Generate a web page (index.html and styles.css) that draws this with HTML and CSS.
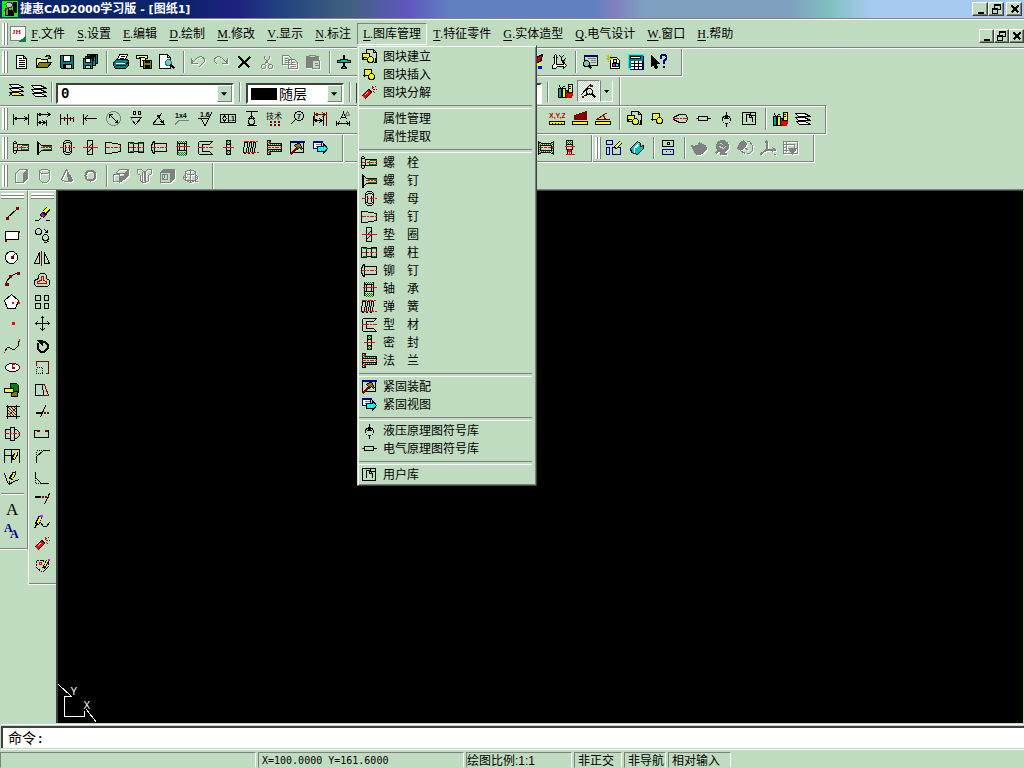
FILE: index.html
```html
<!DOCTYPE html>
<html lang="zh-CN">
<head>
<meta charset="utf-8">
<title>捷惠CAD2000学习版 - [图纸1]</title>
<link rel="stylesheet" href="styles.css">
</head>
<body>
<svg class="patterns" aria-hidden="true">
<defs>
<pattern id="chk-g" width="2" height="2" patternUnits="userSpaceOnUse" x="-.5" y="-.5"><path fill="#008000" stroke="none" d="M0 0h1v1h-1zM1 1h1v1h-1z"/></pattern>
<pattern id="chk-y" width="2" height="2" patternUnits="userSpaceOnUse" x="-.5" y="-.5"><path fill="#ffff00" stroke="none" d="M0 0h2v2h-2z"/><path fill="#c0dcc0" stroke="none" d="M0 0h1v1h-1z"/></pattern>
</defs>
</svg>
<svg class="sprite" aria-hidden="true">
<symbol id="app" viewBox="0 0 16 16"><path fill="#00ff00" stroke="none" d="M0 0h16v16h-16z"/><path fill="#000" stroke="none" d="M11 1h4v11h-4zM7 9h5v6h-5z"/><path fill="#c0c0c0" stroke="#404040" d="M3.500 3.500l2-2h4l1 2-1 3h-4z"/><path fill="#808080" d="M3.500 7.500h3v7h-3z"/><path stroke="#f00" d="M2 10l4-3M9 8l4 4"/></symbol>
<symbol id="jh" viewBox="0 0 16 16"><path fill="#fff" stroke="#808080" d="M.5 .5h15v14h-15z"/><path fill="#008040" stroke="none" d="M8 16l8-6v6z"/><path fill="#fff" stroke="none" d="M8 11l7-2-3 4z"/><text x="2" y="8" class="glyph serif red">JH</text></symbol>
<symbol id="new" viewBox="-.5 -.5 16 16"><path fill="#fff" d="M3 1h7l3 3v10h-10zM10 1v3h3M5 4h3M5 6h6M5 8h6M5 10h6M5 12h6"/></symbol>
<symbol id="open" viewBox="-.5 -.5 16 16"><path fill="#ffff80" d="M0 13v-9h4l1 1h6v3"/><path fill="#808000" d="M0 13l3-5h12l-4 5zM9 2l2-1h2l1 3M14 1v3h-3"/></symbol>
<symbol id="save" viewBox="-.5 -.5 16 16"><path fill="#008080" d="M1 1h13v13h-12l-1-1z"/><path fill="#fff" d="M4 1h7v6h-7z"/><path fill="#c0dcc0" d="M4 10h8v4h-8z"/><path fill="#000" d="M5 11h1v2h-1z"/></symbol>
<symbol id="saveall" viewBox="-.5 -.5 16 16"><path fill="#008080" d="M5 0h10v9h-10z"/><path fill="#fff" d="M7 1h6v3h-6z"/><path fill="#008080" d="M3 2h10v9h-10z"/><path fill="#fff" d="M5 3h6v3h-6z"/><path fill="#008080" d="M1 4h9v10h-9z"/><path fill="#fff" d="M3 4h5v4h-5z"/><path fill="#c0dcc0" d="M3 11h5v3h-5z"/></symbol>
<symbol id="print" viewBox="-.5 -.5 16 16"><path fill="#fff" d="M6 0h8l-2 5h-8z"/><path d="M7 2h4M6 4h4"/><path fill="#008080" d="M3 5h11l1 2v4l-3 3h-10l-2-3v-3z"/><path stroke="#fff" d="M2 9h9"/><path stroke="#ff0" d="M9 11h1"/><path d="M2 11h10l3-4"/></symbol>
<symbol id="plot" viewBox="-.5 -.5 16 16"><path fill="#ffff80" d="M0 1h11v3h-2v6h2v2h-7v-8h-4z"/><path d="M2 3h6M5 6h3"/><path fill="#808000" d="M7 6h8v8h-8z"/><path fill="#000" d="M9 11h4v3h-4zM9 6h4v2h-4z"/></symbol>
<symbol id="preview" viewBox="-.5 -.5 16 16"><path fill="#fff" d="M0 0h8l3 3v11h-11zM8 0v3h3"/><circle cx="9" cy="8" r="3" fill="#80c0c0" stroke="#008080"/><path stroke-width="2" d="M11 10l4 4"/></symbol>
<symbol id="undo" viewBox="-.5 -.5 16 16"><path d="M1 3v6h6M1 9l5-5c3-3 8-2 8 2c0 2-2 3-4 5l-2 2M2 5v3M2 8l5-5"/></symbol>
<symbol id="redo" viewBox="-.5 -.5 16 16"><path d="M14 3v6h-6M14 9l-5-5c-3-3-8-2-8 2c0 2 2 3 3 4M13 5v3M13 8l-5-5"/></symbol>
<symbol id="del" viewBox="-.5 -.5 16 16"><path stroke-width="2" d="M2 2l11 11M14 2l-12 11"/></symbol>
<symbol id="cut" viewBox="-.5 -.5 16 16"><path d="M5 1v3l5 6M10 1v3l-5 6"/><circle cx="4" cy="12" r="2"/><circle cx="11" cy="12" r="2"/></symbol>
<symbol id="copy" viewBox="-.5 -.5 16 16"><path d="M0 1h6l3 3v6h-9zM2 4h3M2 6h5M2 8h5M6 5h6l3 3v6h-9zM8 8h4M8 10h5M8 12h5"/></symbol>
<symbol id="paste" viewBox="-.5 -.5 16 16"><path fill="#808080" d="M1 2h12v11h-12z"/><path fill="#c0dcc0" d="M4 1h6v2h-6zM7 6h7v8h-7zM9 9h3M9 11h4"/></symbol>
<symbol id="pan" viewBox="-.5 -.5 16 16"><path fill="#00c0c0" d="M7 1h1v4l6 1v2h-6v4l2 1v1h-5v-1l2-1v-4h-6v-2l6-1z"/></symbol>
<symbol id="brush" viewBox="-.5 -.5 16 16"><path fill="#c00000" d="M6 4l8-4-1 6-4 2z"/><path stroke="#ff0" stroke-width="3" d="M7 10h5"/><path stroke="#00f" stroke-width="3" d="M9 13h4"/></symbol>
<symbol id="ucs" viewBox="-.5 -.5 16 16"><path fill="#fff" d="M2 3l2-3 2 3h-1v7h7v-2l3 3-3 3v-2h-6l-2 2h-3v-3l2-2v-6h-1z"/><path d="M8 1l2 2v3M12 1l-2 2M10 5l4 4M14 4l-4 5"/></symbol>
<symbol id="find" viewBox="-.5 -.5 16 16"><path fill="#c0dcc0" d="M2 1h13v10h-13z"/><path stroke="#000080" stroke-width="2" d="M2 1h14"/><path stroke="#808080" d="M5 4h8M8 6h5M8 8h5"/><circle cx="4" cy="9" r="3" fill="#80c0c0"/><path stroke-width="2" d="M6 11l3 3"/></symbol>
<symbol id="newblk" viewBox="-.5 -.5 16 16"><path fill="#fff" d="M5 3h6l3 3v8h-9z"/><path fill="#ff0" d="M8 5h3v3h-3z"/><path fill="#f0f" d="M7 9h3v3h-3z"/><path fill="#0ff" d="M10 9h3v3h-3z"/><path stroke="#c0c000" d="M3 0v7M0 4h7M1 1l5 5M6 1l-5 5"/></symbol>
<symbol id="calc" viewBox="-.5 -.5 16 16"><path fill="#008080" stroke="#00ffff" d="M0 0h15v14h-15z"/><path stroke="#000080" d="M15 1v14h-14"/><path fill="#fff" d="M2 2h10v2h-10z"/><path stroke="#000" stroke-width="8" d="M2 10h12"/><path stroke="#fff" stroke-width="2" stroke-dasharray="3 1" d="M2 7h12M2 10h12M2 13h12"/></symbol>
<symbol id="help" viewBox="-.5 -.5 16 16"><path fill="#000" d="M0 1v11l2-2 2 4 2-1-2-4h4z"/><path stroke="#000080" stroke-width="2" d="M9 4v-2l2-2h2l2 2v2l-3 3v2M12 11v2"/></symbol>
<symbol id="layers-y" viewBox="-.5 -.5 16 16"><path fill="#fff" d="M4 4l-3-3h9l5 3z"/><path fill="#fff" d="M4 8l-3-3h9l5 3z"/><path fill="#ff0" d="M4 12l-3-3h9l5 3zM0 13l4-4"/></symbol>
<symbol id="layers" viewBox="-.5 -.5 16 16"><path fill="#fff" d="M4 13l-3-3h9l5 3z"/><path fill="#fff" d="M3 9l-3-3h9l6 3z"/><path fill="#fff" d="M3 5l-3-3h9l6 3z"/></symbol>
<symbol id="lib" viewBox="-.5 -.5 16 16"><path fill="#00a0a0" d="M1 5h3v9h-3zM2 2l1 3"/><path fill="#ff0" d="M5 5h3v9h-3z"/><path fill="#008000" d="M8 7h2v7h-2zM5 4l3-2"/><path fill="#ff0" d="M11 1h4v8h-4zM11 3h2M11 5h2"/><path fill="#f00" stroke="#c00" d="M9 10h6l-1 4h-4z"/></symbol>
<symbol id="snap" viewBox="-.5 -.5 16 16"><path d="M0 12l10-11M2 13l8-3"/><circle cx="9" cy="8" r="3"/><path stroke-width="2" d="M11 10l4 4"/><path stroke="#800000" stroke-width="2" d="M9 2h3M1 13h2"/></symbol>
<symbol id="dim" viewBox="-.5 -.5 16 16"><path d="M0 2v11M15 2v11M0 7h15M1 7l3-2M1 7l3 2M14 7l-3-2M14 7l-3 2"/></symbol>
<symbol id="dim2" viewBox="-.5 -.5 16 16"><path d="M1 1v13M10 8v6M1 3h13M2 3l3-2M2 3l3 2M14 3l-3-2M14 3l-3 2M1 11h9M2 11l3-2M2 11l3 2M9 11l-3-2M9 11l-3 2"/></symbol>
<symbol id="dim3" viewBox="-.5 -.5 16 16"><path d="M1 2v11M8 2v11M14 5v5M5 5v4M11 5v4"/><path stroke="#800000" d="M1 7h13"/></symbol>
<symbol id="dim4" viewBox="-.5 -.5 16 16"><path d="M1 2v11M2 7h12M2 7l3-3M2 7l3 3"/></symbol>
<symbol id="dia" viewBox="-.5 -.5 16 16"><circle cx="8" cy="7" r="7" stroke="#808080"/><path d="M4 3l8 8M4 3v3M4 3h3M12 11v-3M12 11h-3"/></symbol>
<symbol id="rough" viewBox="-.5 -.5 16 16"><path d="M5 0h2v3h-2zM10 0h2v3h-2zM1 6h12M4 9l3 4 6-7"/><path stroke="#808080" d="M2 6l3 5"/></symbol>
<symbol id="ang" viewBox="-.5 -.5 16 16"><path d="M1 13l9-11M1 13h12M6 4l6 8M6 4l1 3M6 4h3M12 12v-4M12 12l-3-2"/></symbol>
<symbol id="chamf" viewBox="0 0 16 16"><text x="1" y="7" class="glyph">1x4</text><path stroke="#808080" d="M1 13.500l4-4h10"/></symbol>
<symbol id="finish" viewBox="0 0 16 16"><text x="3" y="6" class="glyph">1.6</text><path d="M1 7.500h10M4 7l4 8 7-14"/></symbol>
<symbol id="tol" viewBox="0 0 16 16"><path d="M.5 3.500h15v8h-15zM8.500 3.500v8M4.500 5l2 2.500-2 2.500-2-2.500z"/><text x="9" y="10" class="glyph">.1</text></symbol>
<symbol id="datum" viewBox="-.5 -.5 16 16"><path d="M2 0h12M8 0v6M5 7l3-3 3 3zM3 14h10"/><circle cx="8" cy="10" r="3"/></symbol>
<symbol id="tech" viewBox="0 0 16 16"><text x="0" y="8" class="glyph cjk">技术</text><path stroke="#800000" stroke-width="2" stroke-dasharray="2 2" d="M4 11h10M4 14h10"/></symbol>
<symbol id="balloon" viewBox="0 0 16 16"><circle cx="10" cy="5" r="4.500"/><path d="M2 13l5-5"/><text x="8" y="8" class="glyph">7</text></symbol>
<symbol id="dimed" viewBox="-.5 -.5 16 16"><path stroke="#800000" d="M2 0v9M14 0v14M2 3h12M3 3l3-2M3 3l3 2M13 3l-3-2M13 3l-3 2"/><path d="M1 4v10M11 4v10M1 9h10M2 9l3-2M2 9l3 2M10 9l-3-2M10 9l-3 2"/></symbol>
<symbol id="dimtx" viewBox="-.5 -.5 16 16"><path d="M1 9v5M14 9v5M1 12h13M2 12l2-2M2 12l2 2M13 12l-2-2M13 12l-2 2M5 8l3-7 3 7M6 6h4"/><path stroke="#808080" d="M10 4l2-4 2 4z"/></symbol>
<symbol id="xyz" viewBox="0 0 16 16"><text x="0" y="7" class="glyph red">X,Y,Z</text><path fill="#ff0" d="M.5 10.500h15v3h-15zM3.500 12v1M6.500 12v1M9.500 12v1M12.500 12v1"/></symbol>
<symbol id="area" viewBox="-.5 -.5 16 16"><path fill="#800000" stroke="#800000" d="M2 8v-4l12-4v8z"/><path fill="#ff0" d="M0 10h15v3h-15zM3 12v1M6 12v1M9 12v1M12 12v1"/></symbol>
<symbol id="meas" viewBox="-.5 -.5 16 16"><path stroke="#800000" d="M1 8l11-7M1 8h13M8 4l2 4"/><path fill="#ff0" d="M0 10h15v3h-15zM3 12v1M6 12v1M9 12v1M12 12v1"/></symbol>
<symbol id="mkblk" viewBox="-.5 -.5 16 16"><path d="M5 3v-3h7l3 3v10h-3M12 0v3h3M14 8v5"/><path fill="url(#chk-y)" d="M1 4h7v6h-7z"/><circle cx="9" cy="10" r="3" fill="url(#chk-y)"/><path d="M0 8h5M2 7v3"/></symbol>
<symbol id="insblk" viewBox="-.5 -.5 16 16"><path fill="url(#chk-y)" d="M3 2h7v6h-7z"/><circle cx="10" cy="9" r="3" fill="url(#chk-y)"/><path d="M1 8h6M3 7v2"/></symbol>
<symbol id="dynamite" viewBox="-.5 -.5 16 16"><path stroke="#000" stroke-width="5" d="M2 12l7-7"/><path stroke="#f00" stroke-width="3" d="M2 12l6-6"/><path stroke="#fff" d="M3 10l3-3"/><path stroke="#c00000" stroke-dasharray="2 1" d="M11 3l4-3M11 4h5M11 2v-3M12 6l3 3"/></symbol>
<symbol id="feat" viewBox="-.5 -.5 16 16"><path d="M1 8v-2l4-2 2-1h6l2 3v2l-2 3h-6l-2-1z"/><path stroke="#f00" stroke-dasharray="6 1 2 1" d="M0 7h16"/></symbol>
<symbol id="elec" viewBox="-.5 -.5 16 16"><path d="M3 5h9v4h-9zM0 7h3M12 7h3"/><path stroke="#f00" d="M0 7h1M15 7h1"/></symbol>
<symbol id="hyd" viewBox="-.5 -.5 16 16"><circle cx="8" cy="8" r="4"/><path d="M8 0v7M8 12v3"/><path fill="#000" d="M6 7l2-3 2 3z"/></symbol>
<symbol id="userlib" viewBox="-.5 -.5 16 16"><path d="M1 1h8v3h5v9h-13zM5 10v-7h3l3 3v4M8 3v3h3M9 1h5v3"/></symbol>
<symbol id="bolt" viewBox="-.5 -.5 16 16"><path d="M1 1h1l2 3v6l-2 3h-1l-1-1v-10zM0 3h3M0 10h3M4 4h11v6h-11z"/><path stroke="#008000" d="M8 5h7M8 9h7M8 5v4"/><path stroke="#f00" stroke-dasharray="4 1 2 1" d="M0 7h16"/></symbol>
<symbol id="screw" viewBox="-.5 -.5 16 16"><path stroke-width="2" d="M1 1v13"/><path d="M1 1l4 4h10v5h-10l-4 4"/><path stroke="#008000" d="M6 6h9M6 9h9"/><path stroke="#f00" stroke-dasharray="4 1 2 1" d="M4 7h12"/></symbol>
<symbol id="nut" viewBox="-.5 -.5 16 16"><path d="M6 0h4l2 2v10l-2 2h-4l-2-2v-10zM4 4l3-2h3l2 2M4 10l3 2h3l2-2M6 4v6M10 4v6"/><path stroke="#f00" stroke-dasharray="4 1 2 1" d="M0 7h16"/></symbol>
<symbol id="pin" viewBox="-.5 -.5 16 16"><path d="M0 2h4l11 2v7l-11 2h-4z"/><path stroke="#f00" stroke-dasharray="4 1 2 1" d="M0 7h16"/></symbol>
<symbol id="washer" viewBox="-.5 -.5 16 16"><path d="M5 0h5v14h-5zM5 8l5-5M5 12l5-5"/><path stroke="#f00" d="M0 7h15"/></symbol>
<symbol id="stud" viewBox="-.5 -.5 16 16"><path d="M0 2h5v10h-5zM5 3h5v8h-5zM10 2h5v10h-5z"/><path stroke="#008000" d="M1 3h4M1 11h4M10 3h4M10 11h4"/><path stroke="#f00" stroke-dasharray="4 1 2 1" d="M0 7h16"/></symbol>
<symbol id="rivet" viewBox="-.5 -.5 16 16"><path d="M3 1h-1l-2 4v4l2 4h1zM3 3h12v8h-12"/><path stroke="#f00" stroke-dasharray="4 1 2 1" d="M0 7h16"/></symbol>
<symbol id="bearing" viewBox="-.5 -.5 16 16"><path fill="url(#chk-g)" stroke="none" d="M3 0h9v3h-9zM3 11h9v4h-9z"/><path d="M3 0v14M12 0v14M3 3h9v7h-9zM5 3v7M10 3v7"/><path stroke="#f00" d="M1 6h14"/></symbol>
<symbol id="spring" viewBox="-.5 -.5 16 16"><path d="M1 13l-1-2 1-9 2-1 1 2-1 9zM5 13v-2l1-9 1-1 1 2-1 9zM9 13v-2l1-9 1-1 1 2-1 9z"/><path stroke="#f00" stroke-dasharray="5 1" d="M0 1h14M1 12h14"/></symbol>
<symbol id="profile" viewBox="-.5 -.5 16 16"><path d="M15 1h-13l-1 1v11l1 1h13l-3-3h-7v-7h7z"/><path stroke="#f00" stroke-dasharray="7 1 2 1" d="M0 7h16"/></symbol>
<symbol id="seal" viewBox="-.5 -.5 16 16"><path fill="url(#chk-g)" d="M6 0h4v4h-4zM6 10h4v4h-4z"/><path d="M6 4h4v6h-4z"/><path stroke="#f00" d="M2 7h11"/></symbol>
<symbol id="flange" viewBox="-.5 -.5 16 16"><path fill="url(#chk-g)" d="M1 0h3v3h11v8h-11v3h-3z"/><path fill="#c0dcc0" d="M1 5h14v4h-14z"/><path stroke="#f00" stroke-dasharray="4 1 2 1" d="M0 7h16M0 2h5M0 12h5"/></symbol>
<symbol id="assem" viewBox="-.5 -.5 16 16"><path fill="#c0dcc0" d="M1 1h13v11h-13z"/><path stroke="#000080" stroke-width="2" d="M1 1h14"/><path fill="#808000" d="M5 5l3-2h2l3 5-1 1-2-2-2 2-1-2z"/><path stroke="#800000" stroke-width="2" d="M1 14l7-7"/></symbol>
<symbol id="view" viewBox="-.5 -.5 16 16"><path fill="#fff" stroke="#000080" d="M1 1h8v7h-8z"/><path stroke="#000080" stroke-width="2" d="M1 1h9"/><path stroke="#808080" d="M3 4h5M3 6h5"/><path fill="#0ff" d="M5 6h6v-3l4 5-4 5v-2h-6z"/></symbol>
<symbol id="gear" viewBox="-.5 -.5 16 16"><path fill="url(#chk-g)" d="M0 1l3 2h9l3-2v13l-3-2h-9l-3 2z"/><path fill="#c0dcc0" d="M2 5h11v5h-11z"/><path stroke="#f00" stroke-dasharray="3 1" d="M1 7h14"/></symbol>
<symbol id="valve" viewBox="-.5 -.5 16 16"><path fill="url(#chk-g)" d="M5 0h6v4h-6z"/><path d="M5 4h6v5h-6zM6 9v5M10 9v5"/><path stroke="#f00" d="M3 6h10M4 14h9M8 8v5M6 12l2-3 2 3"/></symbol>
<symbol id="sketch" viewBox="-.5 -.5 16 16"><path stroke="#000080" d="M0 0h6v4h-6zM0 7h3v7h-3zM6 7h8v7h-8z"/><path stroke="#000" stroke-width="4" d="M8 8l6-6"/><path stroke="#ff0" stroke-width="2" d="M9 7l5-5"/></symbol>
<symbol id="solid" viewBox="-.5 -.5 16 16"><path fill="#00c0c0" d="M1 8l7-7 3 2v3l3-1v3l-6 6-6-2z"/><path stroke="#fff" d="M4 8l5-5M5 12v-4l5-4"/></symbol>
<symbol id="rack" viewBox="-.5 -.5 16 16"><path d="M2 0h11v6h-11z"/><circle cx="8" cy="3" r="1"/><path stroke="#000080" d="M2 9h11v5h-11zM5 11h1M9 11h1"/></symbol>
<symbol id="teapot" viewBox="-.5 -.5 16 16"><path fill="#808080" d="M0 5l3 1 3-2 2-2 3 2 3 1 1 4-3 3-3 2h-4l-3-4z"/></symbol>
<symbol id="ball" viewBox="-.5 -.5 16 16"><circle cx="8" cy="6" r="6" fill="#808080"/><path stroke="#c0dcc0" d="M6 3l3 1M5 6l4 2 2-2"/><path stroke-width="2" d="M1 13l4-4M5 13h7"/></symbol>
<symbol id="orbit" viewBox="-.5 -.5 16 16"><path fill="#808080" d="M3 2l3-2 3 3-2 4-4 3-3-2z"/><path d="M9 1h3l3 4v5l-3 3h-3M7 7l4 3M4 11l4 2"/></symbol>
<symbol id="axes" viewBox="-.5 -.5 16 16"><path stroke-width="2" d="M6 0v9h9M6 9l-6 5"/><path d="M4 3l2-3 2 3M12 7l3 2-3 2M13 14h2"/></symbol>
<symbol id="render" viewBox="-.5 -.5 16 16"><path d="M0 1h14v12h-14zM0 4h6M3 1v10M0 7h3M0 10h4M5 4h6v4"/><path fill="#808080" d="M5 8h8l-4 6z"/></symbol>
<symbol id="box" viewBox="-.5 -.5 16 16"><path d="M2 5l4-4h8v9l-4 4h-8z"/><path fill="#808080" d="M10 5l4-4v9l-4 4z"/></symbol>
<symbol id="cyl" viewBox="-.5 -.5 16 16"><ellipse cx="8" cy="3" rx="5" ry="2"/><path d="M3 3v8l3 3h4l3-3v-8"/></symbol>
<symbol id="cone" viewBox="-.5 -.5 16 16"><path d="M7 1l-5 10 3 2h6l2-2z"/><path fill="#808080" d="M8 3l1 10h3l1-2z"/></symbol>
<symbol id="torus" viewBox="-.5 -.5 16 16"><circle cx="8" cy="7" r="5" stroke-width="2"/></symbol>
<symbol id="extr" viewBox="-.5 -.5 16 16"><path d="M3 4l3-3h9v6l-4 4v-6h-8zM0 6h6v7h-6z"/><path fill="#808080" d="M11 5l4-4v5l-4 4zM6 8h4v3l-4 3z"/></symbol>
<symbol id="rev" viewBox="-.5 -.5 16 16"><path d="M1 1h4l2 2h2l2-2h4v4l-3 2v5l-3 2h-3l-2-2v-5l-3-2zM6 3v10M9 3v10M8 2v10"/></symbol>
<symbol id="shell" viewBox="-.5 -.5 16 16"><path fill="#808080" d="M1 4l3-3h11v9l-4 4z"/><path fill="#c0dcc0" d="M1 4h10v10h-10z"/><path d="M3 6h5v5h-5zM5 6v3l-2 2M1 4l3-3h11l-4 3"/></symbol>
<symbol id="shaft" viewBox="-.5 -.5 16 16"><ellipse cx="8" cy="4" rx="5" ry="2"/><ellipse cx="8" cy="9" rx="7" ry="3"/><path d="M3 4v8l5 2 5-2v-8M8 0v14M0 9h4M12 9h4M12 13h3"/></symbol>
<symbol id="line" viewBox="-.5 -.5 16 16"><path d="M2 12l11-10"/><path stroke="#800000" stroke-width="3" d="M1 12h3M11 2h3"/></symbol>
<symbol id="rect" viewBox="-.5 -.5 16 16"><path fill="#fff" d="M1 3h13v8h-13z"/><path stroke="#800000" stroke-width="2" d="M0 12h2M13 3h3"/></symbol>
<symbol id="circle" viewBox="-.5 -.5 16 16"><circle cx="7" cy="7" r="6" fill="#fff"/><path stroke="#800000" d="M7 7l4-4"/><path stroke="#800000" stroke-width="3" d="M6 7h3"/></symbol>
<symbol id="arc" viewBox="-.5 -.5 16 16"><path d="M2 12v-3l4-5 5-3h3"/><path stroke="#800000" stroke-width="3" d="M0 12h4M4 4h3M12 1h3"/></symbol>
<symbol id="poly" viewBox="-.5 -.5 16 16"><path fill="#fff" d="M7 0l7 6-3 8h-8l-3-8z"/><path stroke="#f00" stroke-width="2" d="M7 8h2M13 8h2"/></symbol>
<symbol id="point" viewBox="-.5 -.5 16 16"><path stroke="#f00" stroke-width="3" d="M7 7h3"/></symbol>
<symbol id="spline" viewBox="-.5 -.5 16 16"><path d="M0 13l3-4h2l3 2h2l4-4v-5"/><path stroke="#f00" d="M0 13v1M15 0v3"/></symbol>
<symbol id="ellipse" viewBox="-.5 -.5 16 16"><ellipse cx="8" cy="7" rx="7" ry="4" fill="#fff"/><path stroke="#c00000" stroke-width="2" d="M7 7h3M7 3h3M14 7h2"/><path stroke="#c00000" d="M8 3v4"/></symbol>
<symbol id="block" viewBox="-.5 -.5 16 16"><path fill="#008000" d="M6 1h6l2 2v7h-8z"/><path fill="#808000" d="M7 9h6v5h-6z"/><path fill="#ff0" d="M0 6h9v4h-9z"/></symbol>
<symbol id="hatch" viewBox="-.5 -.5 16 16"><path d="M1 2h14M1 12h14M3 0v14M12 0v14"/><path stroke="#800000" d="M4 9l3 3M4 6l6 6M4 3l8 8M7 3l5 5M10 3l2 2M4 11l8-8"/></symbol>
<symbol id="shaftd" viewBox="-.5 -.5 16 16"><path d="M1 3h5v9h-5zM6 1h4v13h-4zM10 3h2l3 3v3l-3 3h-2"/><path stroke="#f00" stroke-dasharray="4 1 2 1" d="M0 7h16"/></symbol>
<symbol id="table" viewBox="-.5 -.5 16 16"><path d="M0 14v-13h15v13M0 7h8M7 1v6M0 7v7M7 7v7"/><path stroke-width="4" d="M8 11l4-6"/><path stroke="#ff0" stroke-width="2" d="M9 10l3-5"/><path stroke="#800000" stroke-width="2" d="M12 4h1"/></symbol>
<symbol id="pencil" viewBox="-.5 -.5 16 16"><path d="M0 3l3 9 2 2 4-3 6-2M5 13v-3"/><path stroke-width="4" d="M6 9l4-7"/><path stroke="#ff0" stroke-width="2" d="M7 8l3-5"/><path stroke="#800000" stroke-width="2" d="M10 1h1"/></symbol>
<symbol id="txtA" viewBox="0 0 16 16"><text x="2" y="14" class="big-a">A</text></symbol>
<symbol id="txtAA" viewBox="0 0 16 16"><text x="0" y="9" class="small-a">A</text><text x="6" y="15" class="small-a">A</text></symbol>
<symbol id="erase" viewBox="-.5 -.5 16 16"><path stroke-width="5" d="M7 10l7-8"/><path stroke="#ff0" stroke-width="3" d="M10 6l4-5"/><path stroke="#c000c0" stroke-width="3" d="M7 10l2-2"/><path d="M0 14h4l2-2M11 14h4"/></symbol>
<symbol id="copyo" viewBox="-.5 -.5 16 16"><circle cx="4" cy="3" r="3"/><circle cx="11" cy="9" r="3"/><path d="M10 1l3 3v-3M10 4h3M10 14l5-1"/></symbol>
<symbol id="mirror" viewBox="-.5 -.5 16 16"><path d="M5 2v11h-5zM10 2v11h5z"/><path stroke="#800000" d="M7 0v15"/></symbol>
<symbol id="offset" viewBox="-.5 -.5 16 16"><path d="M4 6v-3l2-2h4l2 2v3l3 2v4l-2 2h-11l-2-2v-4z"/><path stroke="#c00000" d="M7 8v-4h2v4l3 1v2h-9v-2z"/></symbol>
<symbol id="array" viewBox="-.5 -.5 16 16"><path d="M1 1h5v5h-5zM10 1h4v5h-4zM1 9h5v5h-5zM10 9h4v5h-4z"/></symbol>
<symbol id="move" viewBox="-.5 -.5 16 16"><path d="M8 0v14M1 7h14M6 2l2-2 2 2M6 12l2 2 2-2M3 5l-2 2 2 2M13 5l2 2-2 2"/></symbol>
<symbol id="rotate" viewBox="-.5 -.5 16 16"><path stroke-width="2" d="M4 5l-1 2v3l3 3h4l3-3v-4l-3-3h-2"/><path fill="#000" d="M3 2h5v5z"/></symbol>
<symbol id="scale" viewBox="-.5 -.5 16 16"><path stroke="#800000" d="M2 5v-4h12v12h-3"/><path stroke-dasharray="1 1" d="M2 7h6v6h-6z"/></symbol>
<symbol id="stretch" viewBox="-.5 -.5 16 16"><path d="M8 2h-7v11h8z"/><path stroke="#800000" d="M8 2h2l4 11h-5"/></symbol>
<symbol id="trim" viewBox="-.5 -.5 16 16"><path d="M11 1l-5 12"/><path stroke-width="2" d="M1 8h6"/><path stroke="#800000" stroke-width="2" stroke-dasharray="2 1" d="M9 8h6"/></symbol>
<symbol id="break" viewBox="-.5 -.5 16 16"><path d="M3 4h-3v7h14v-7h-3"/><path stroke="#800000" stroke-width="2" d="M2 4h3M10 4h3"/></symbol>
<symbol id="chamfer" viewBox="-.5 -.5 16 16"><path d="M2 14v-6l7-6h6"/><path stroke-dasharray="1 1" d="M2 8v-6h7"/></symbol>
<symbol id="fillet" viewBox="-.5 -.5 16 16"><path d="M1 1v6l6 6h7"/><path stroke-dasharray="1 1" d="M1 7v6h6"/></symbol>
<symbol id="extend" viewBox="-.5 -.5 16 16"><path d="M15 1l-5 11"/><path stroke-width="2" d="M0 4h6"/><path stroke="#800000" stroke-width="2" stroke-dasharray="2 1" d="M7 4h7"/></symbol>
<symbol id="editpl" viewBox="-.5 -.5 16 16"><path d="M0 14l2-4 4-2 3 4h3l3-4"/><path stroke-width="4" d="M2 10l4-8"/><path stroke="#ff0" stroke-width="2" d="M3 9l3-6"/><path stroke="#f0f" stroke-width="2" d="M5 1h3"/></symbol>
<symbol id="editsp" viewBox="-.5 -.5 16 16"><path stroke-dasharray="2 1" d="M2 2h6l2 1 4-1v6l-6 6-6-5z"/><circle cx="6" cy="5" r="1" stroke="#f00"/><path stroke-width="3" d="M9 10l4-7"/><path stroke="#ff0" d="M10 8l3-6"/><path stroke="#f0f" stroke-width="2" d="M13 1h2"/></symbol>
<symbol id="w-min" viewBox="-.5 -.5 12 10"><path stroke-width="2" d="M3 8h6"/></symbol>
<symbol id="w-res" viewBox="-.5 -.5 12 10"><path d="M4 3v-3h6v5h-3M4 1h6M2 4h5v5h-5zM2 5h5"/></symbol>
<symbol id="w-close" viewBox="-.5 -.5 12 10"><path stroke-width="2" d="M3 1l7 7M10 1l-7 7"/></symbol>
<symbol id="arrow" viewBox="0 0 8 4"><path fill="#000" stroke="none" d="M0 0h7l-3.500 4z"/></symbol>
</svg>

<header class="titlebar">
  <svg class="icon"><use href="#app"/></svg>
  <h1 class="title">捷惠<span>CAD2000</span>学习版<span> - [</span>图纸<span>1]</span></h1>
  <div class="winbtns">
    <button class="winbtn" aria-label="最小化"><svg class="wi"><use href="#w-min"/></svg></button>
    <button class="winbtn" aria-label="还原"><svg class="wi"><use href="#w-res"/></svg></button>
    <button class="winbtn apart" aria-label="关闭"><svg class="wi"><use href="#w-close"/></svg></button>
  </div>
</header>

<nav class="menubar">
  <span class="grip"></span>
  <svg class="icon doc"><use href="#jh"/></svg>
  <ul class="menus">
    <li><button class="menu"><u>F</u><i>.</i>文件</button></li>
    <li><button class="menu"><u>S</u><i>.</i>设置</button></li>
    <li><button class="menu"><u>E</u><i>.</i>编辑</button></li>
    <li><button class="menu"><u class="mid">D</u><i>.</i>绘制</button></li>
    <li><button class="menu"><u class="wide">M</u><i>.</i>修改</button></li>
    <li><button class="menu"><u class="mid">V</u><i>.</i>显示</button></li>
    <li><button class="menu"><u class="mid">N</u><i>.</i>标注</button></li>
    <li class="open"><button class="menu" aria-expanded="true"><u>L</u><i>.</i>图库管理</button>
      <ul class="dropdown">
        <li><button class="item"><svg class="icon"><use href="#mkblk"/></svg>图块建立</button></li>
        <li><button class="item"><svg class="icon"><use href="#insblk"/></svg>图块插入</button></li>
        <li><button class="item"><svg class="icon"><use href="#dynamite"/></svg>图块分解</button></li>
        <li class="rule"></li>
        <li><button class="item plain">属性管理</button></li>
        <li><button class="item plain">属性提取</button></li>
        <li class="rule"></li>
        <li><button class="item"><svg class="icon"><use href="#bolt"/></svg>螺　栓</button></li>
        <li><button class="item"><svg class="icon"><use href="#screw"/></svg>螺　钉</button></li>
        <li><button class="item"><svg class="icon"><use href="#nut"/></svg>螺　母</button></li>
        <li><button class="item"><svg class="icon"><use href="#pin"/></svg>销　钉</button></li>
        <li><button class="item"><svg class="icon"><use href="#washer"/></svg>垫　圈</button></li>
        <li><button class="item"><svg class="icon"><use href="#stud"/></svg>螺　柱</button></li>
        <li><button class="item"><svg class="icon"><use href="#rivet"/></svg>铆　钉</button></li>
        <li><button class="item"><svg class="icon"><use href="#bearing"/></svg>轴　承</button></li>
        <li><button class="item"><svg class="icon"><use href="#spring"/></svg>弹　簧</button></li>
        <li><button class="item"><svg class="icon"><use href="#profile"/></svg>型　材</button></li>
        <li><button class="item"><svg class="icon"><use href="#seal"/></svg>密　封</button></li>
        <li><button class="item"><svg class="icon"><use href="#flange"/></svg>法　兰</button></li>
        <li class="rule"></li>
        <li><button class="item"><svg class="icon"><use href="#assem"/></svg>紧固装配</button></li>
        <li><button class="item"><svg class="icon"><use href="#view"/></svg>紧固视图</button></li>
        <li class="rule"></li>
        <li><button class="item"><svg class="icon"><use href="#hyd"/></svg>液压原理图符号库</button></li>
        <li><button class="item"><svg class="icon"><use href="#elec"/></svg>电气原理图符号库</button></li>
        <li class="rule"></li>
        <li><button class="item"><svg class="icon"><use href="#userlib"/></svg>用户库</button></li>
      </ul>
    </li>
    <li><button class="menu"><u>T</u><i>.</i>特征零件</button></li>
    <li><button class="menu"><u class="mid">G</u><i>.</i>实体造型</button></li>
    <li><button class="menu"><u class="mid">Q</u><i>.</i>电气设计</button></li>
    <li><button class="menu"><u class="wide">W</u><i>.</i>窗口</button></li>
    <li><button class="menu"><u class="mid">H</u><i>.</i>帮助</button></li>
  </ul>
  <div class="winbtns">
    <button class="winbtn" aria-label="最小化图纸"><svg class="wi"><use href="#w-min"/></svg></button>
    <button class="winbtn" aria-label="还原图纸"><svg class="wi"><use href="#w-res"/></svg></button>
    <button class="winbtn" aria-label="关闭图纸"><svg class="wi"><use href="#w-close"/></svg></button>
  </div>
</nav>

<div class="row">
  <div class="toolbar" role="toolbar" aria-label="标准">
    <span class="grip"></span>
    <button class="tool" aria-label="新建"><svg class="icon"><use href="#new"/></svg></button>
    <button class="tool" aria-label="打开"><svg class="icon"><use href="#open"/></svg></button>
    <button class="tool" aria-label="保存"><svg class="icon"><use href="#save"/></svg></button>
    <button class="tool" aria-label="全部保存"><svg class="icon"><use href="#saveall"/></svg></button>
    <span class="sep"></span>
    <button class="tool" aria-label="打印"><svg class="icon"><use href="#print"/></svg></button>
    <button class="tool" aria-label="绘图输出"><svg class="icon"><use href="#plot"/></svg></button>
    <button class="tool" aria-label="预览"><svg class="icon"><use href="#preview"/></svg></button>
    <span class="sep"></span>
    <button class="tool" disabled aria-label="撤消"><svg class="icon"><use href="#undo"/></svg></button>
    <button class="tool" disabled aria-label="重做"><svg class="icon"><use href="#redo"/></svg></button>
    <button class="tool" aria-label="删除"><svg class="icon"><use href="#del"/></svg></button>
    <button class="tool" disabled aria-label="剪切"><svg class="icon"><use href="#cut"/></svg></button>
    <button class="tool" disabled aria-label="复制"><svg class="icon"><use href="#copy"/></svg></button>
    <button class="tool" disabled aria-label="粘贴"><svg class="icon"><use href="#paste"/></svg></button>
    <span class="sep"></span>
    <button class="tool" aria-label="平移"><svg class="icon"><use href="#pan"/></svg></button>
    <span class="space std"></span>
    <button class="tool" aria-label="格式刷"><svg class="icon"><use href="#brush"/></svg></button>
    <button class="tool" aria-label="坐标系"><svg class="icon"><use href="#ucs"/></svg></button>
    <span class="sep"></span>
    <button class="tool" aria-label="查找"><svg class="icon"><use href="#find"/></svg></button>
    <button class="tool" aria-label="新图块"><svg class="icon"><use href="#newblk"/></svg></button>
    <button class="tool" aria-label="计算器"><svg class="icon"><use href="#calc"/></svg></button>
    <button class="tool" aria-label="帮助"><svg class="icon"><use href="#help"/></svg></button>
  </div>
</div>

<div class="row">
  <div class="toolbar props" role="toolbar" aria-label="属性">
    <button class="tool" aria-label="图层管理"><svg class="icon"><use href="#layers-y"/></svg></button>
    <button class="tool" aria-label="图层"><svg class="icon"><use href="#layers"/></svg></button>
    <span class="bar"></span>
    <span class="combo layer"><select aria-label="当前图层"><option>0</option></select><svg class="drop"><use href="#arrow"/></svg></span>
    <span class="bar"></span>
    <span class="combo color"><i class="swatch"></i><select aria-label="颜色"><option>随层</option></select><svg class="drop"><use href="#arrow"/></svg></span>
    <span class="bar"></span>
    <span class="combo ltype"><select aria-label="线型"><option></option></select></span>
    <span class="bar"></span>
    <button class="tool" aria-label="图库"><svg class="icon"><use href="#lib"/></svg></button>
    <button class="tool pressed" aria-pressed="true" aria-label="捕捉"><svg class="icon"><use href="#snap"/></svg></button>
    <button class="more" aria-label="捕捉选项"><svg class="tiny"><use href="#arrow"/></svg></button>
  </div>
</div>

<div class="row">
  <div class="toolbar topline" role="toolbar" aria-label="标注">
    <span class="grip"></span>
    <button class="tool" aria-label="线性标注"><svg class="icon"><use href="#dim"/></svg></button>
    <button class="tool" aria-label="基线标注"><svg class="icon"><use href="#dim2"/></svg></button>
    <button class="tool" aria-label="连续标注"><svg class="icon"><use href="#dim3"/></svg></button>
    <button class="tool" aria-label="半标注"><svg class="icon"><use href="#dim4"/></svg></button>
    <button class="tool" aria-label="直径"><svg class="icon"><use href="#dia"/></svg></button>
    <button class="tool" aria-label="焊接"><svg class="icon"><use href="#rough"/></svg></button>
    <button class="tool" aria-label="角度"><svg class="icon"><use href="#ang"/></svg></button>
    <button class="tool" aria-label="倒角标注"><svg class="icon"><use href="#chamf"/></svg></button>
    <button class="tool" aria-label="粗糙度"><svg class="icon"><use href="#finish"/></svg></button>
    <button class="tool" aria-label="形位公差"><svg class="icon"><use href="#tol"/></svg></button>
    <button class="tool" aria-label="基准"><svg class="icon"><use href="#datum"/></svg></button>
    <button class="tool" aria-label="技术要求"><svg class="icon"><use href="#tech"/></svg></button>
    <button class="tool" aria-label="序号"><svg class="icon"><use href="#balloon"/></svg></button>
    <button class="tool" aria-label="标注编辑"><svg class="icon"><use href="#dimed"/></svg></button>
    <button class="tool" aria-label="标注文字"><svg class="icon"><use href="#dimtx"/></svg></button>
    <span class="space dims"></span>
    <button class="tool" aria-label="坐标"><svg class="icon"><use href="#xyz"/></svg></button>
    <button class="tool" aria-label="面积"><svg class="icon"><use href="#area"/></svg></button>
    <button class="tool" aria-label="测量"><svg class="icon"><use href="#meas"/></svg></button>
    <span class="sep"></span>
    <button class="tool" aria-label="图块建立"><svg class="icon"><use href="#mkblk"/></svg></button>
    <button class="tool" aria-label="图块插入"><svg class="icon"><use href="#insblk"/></svg></button>
    <button class="tool" aria-label="特征"><svg class="icon"><use href="#feat"/></svg></button>
    <button class="tool" aria-label="电气"><svg class="icon"><use href="#elec"/></svg></button>
    <button class="tool" aria-label="液压"><svg class="icon"><use href="#hyd"/></svg></button>
    <button class="tool" aria-label="用户库"><svg class="icon"><use href="#userlib"/></svg></button>
    <span class="sep"></span>
    <button class="tool" aria-label="资料库"><svg class="icon"><use href="#lib"/></svg></button>
    <button class="tool" aria-label="层"><svg class="icon"><use href="#layers"/></svg></button>
  </div>
</div>

<div class="row">
  <div class="toolbar" role="toolbar" aria-label="标准件">
    <span class="grip"></span>
    <button class="tool" aria-label="螺栓"><svg class="icon"><use href="#bolt"/></svg></button>
    <button class="tool" aria-label="螺钉"><svg class="icon"><use href="#screw"/></svg></button>
    <button class="tool" aria-label="螺母"><svg class="icon"><use href="#nut"/></svg></button>
    <button class="tool" aria-label="垫圈"><svg class="icon"><use href="#washer"/></svg></button>
    <button class="tool" aria-label="销钉"><svg class="icon"><use href="#pin"/></svg></button>
    <button class="tool" aria-label="螺柱"><svg class="icon"><use href="#stud"/></svg></button>
    <button class="tool" aria-label="铆钉"><svg class="icon"><use href="#rivet"/></svg></button>
    <button class="tool" aria-label="轴承"><svg class="icon"><use href="#bearing"/></svg></button>
    <button class="tool" aria-label="型材"><svg class="icon"><use href="#profile"/></svg></button>
    <button class="tool" aria-label="密封"><svg class="icon"><use href="#seal"/></svg></button>
    <button class="tool" aria-label="弹簧"><svg class="icon"><use href="#spring"/></svg></button>
    <button class="tool" aria-label="法兰"><svg class="icon"><use href="#flange"/></svg></button>
    <button class="tool" aria-label="紧固装配"><svg class="icon"><use href="#assem"/></svg></button>
    <button class="tool" aria-label="紧固视图"><svg class="icon"><use href="#view"/></svg></button>
  </div>
  <div class="toolbar parts" role="toolbar" aria-label="特征零件">
    <button class="tool" aria-label="齿轮"><svg class="icon"><use href="#gear"/></svg></button>
    <button class="tool" aria-label="阀"><svg class="icon"><use href="#valve"/></svg></button>
  </div>
  <div class="toolbar" role="toolbar" aria-label="造型">
    <span class="grip"></span>
    <button class="tool" aria-label="草图"><svg class="icon"><use href="#sketch"/></svg></button>
    <button class="tool" aria-label="实体"><svg class="icon"><use href="#solid"/></svg></button>
    <span class="sep"></span>
    <button class="tool" aria-label="视图配置"><svg class="icon"><use href="#rack"/></svg></button>
    <span class="sep"></span>
    <button class="tool" disabled aria-label="渲染"><svg class="icon"><use href="#teapot"/></svg></button>
    <button class="tool" disabled aria-label="材质"><svg class="icon"><use href="#ball"/></svg></button>
    <button class="tool" disabled aria-label="旋转视图"><svg class="icon"><use href="#orbit"/></svg></button>
    <button class="tool" disabled aria-label="坐标轴"><svg class="icon"><use href="#axes"/></svg></button>
    <button class="tool" disabled aria-label="渲染设置"><svg class="icon"><use href="#render"/></svg></button>
  </div>
</div>

<div class="row">
  <div class="toolbar last" role="toolbar" aria-label="实体">
    <span class="grip"></span>
    <button class="tool" disabled aria-label="长方体"><svg class="icon"><use href="#box"/></svg></button>
    <button class="tool" disabled aria-label="圆柱"><svg class="icon"><use href="#cyl"/></svg></button>
    <button class="tool" disabled aria-label="圆锥"><svg class="icon"><use href="#cone"/></svg></button>
    <button class="tool" disabled aria-label="圆环"><svg class="icon"><use href="#torus"/></svg></button>
    <span class="sep"></span>
    <button class="tool" disabled aria-label="拉伸实体"><svg class="icon"><use href="#extr"/></svg></button>
    <button class="tool" disabled aria-label="旋转实体"><svg class="icon"><use href="#rev"/></svg></button>
    <button class="tool" disabled aria-label="抽壳"><svg class="icon"><use href="#shell"/></svg></button>
    <button class="tool" disabled aria-label="轴"><svg class="icon"><use href="#shaft"/></svg></button>
  </div>
</div>

<main class="work">
  <div class="palette draw" role="toolbar" aria-label="绘制">
    <span class="hgrip"></span>
    <button class="tool" aria-label="直线"><svg class="icon"><use href="#line"/></svg></button>
    <button class="tool" aria-label="矩形"><svg class="icon"><use href="#rect"/></svg></button>
    <button class="tool" aria-label="圆"><svg class="icon"><use href="#circle"/></svg></button>
    <button class="tool" aria-label="圆弧"><svg class="icon"><use href="#arc"/></svg></button>
    <button class="tool" aria-label="多边形"><svg class="icon"><use href="#poly"/></svg></button>
    <button class="tool" aria-label="点"><svg class="icon"><use href="#point"/></svg></button>
    <button class="tool" aria-label="样条"><svg class="icon"><use href="#spline"/></svg></button>
    <button class="tool" aria-label="椭圆"><svg class="icon"><use href="#ellipse"/></svg></button>
    <button class="tool" aria-label="块"><svg class="icon"><use href="#block"/></svg></button>
    <button class="tool" aria-label="剖面线"><svg class="icon"><use href="#hatch"/></svg></button>
    <button class="tool" aria-label="轴类"><svg class="icon"><use href="#shaftd"/></svg></button>
    <button class="tool" aria-label="表格"><svg class="icon"><use href="#table"/></svg></button>
    <button class="tool" aria-label="徒手画"><svg class="icon"><use href="#pencil"/></svg></button>
    <span class="hsep"></span>
    <button class="tool" aria-label="文字"><svg class="icon"><use href="#txtA"/></svg></button>
    <button class="tool" aria-label="文字样式"><svg class="icon"><use href="#txtAA"/></svg></button>
  </div>
  <div class="palette edit" role="toolbar" aria-label="修改">
    <span class="hgrip"></span>
    <button class="tool" aria-label="擦除"><svg class="icon"><use href="#erase"/></svg></button>
    <button class="tool" aria-label="复制对象"><svg class="icon"><use href="#copyo"/></svg></button>
    <button class="tool" aria-label="镜像"><svg class="icon"><use href="#mirror"/></svg></button>
    <button class="tool" aria-label="偏移"><svg class="icon"><use href="#offset"/></svg></button>
    <button class="tool" aria-label="阵列"><svg class="icon"><use href="#array"/></svg></button>
    <button class="tool" aria-label="移动"><svg class="icon"><use href="#move"/></svg></button>
    <button class="tool" aria-label="旋转"><svg class="icon"><use href="#rotate"/></svg></button>
    <button class="tool" aria-label="缩放"><svg class="icon"><use href="#scale"/></svg></button>
    <button class="tool" aria-label="拉伸"><svg class="icon"><use href="#stretch"/></svg></button>
    <button class="tool" aria-label="修剪"><svg class="icon"><use href="#trim"/></svg></button>
    <button class="tool" aria-label="打断"><svg class="icon"><use href="#break"/></svg></button>
    <button class="tool" aria-label="倒角"><svg class="icon"><use href="#chamfer"/></svg></button>
    <button class="tool" aria-label="圆角"><svg class="icon"><use href="#fillet"/></svg></button>
    <button class="tool" aria-label="延伸"><svg class="icon"><use href="#extend"/></svg></button>
    <button class="tool" aria-label="编辑多段线"><svg class="icon"><use href="#editpl"/></svg></button>
    <button class="tool" aria-label="分解"><svg class="icon"><use href="#dynamite"/></svg></button>
    <button class="tool" aria-label="编辑样条"><svg class="icon"><use href="#editsp"/></svg></button>
  </div>
  <section class="canvas" aria-label="图纸1">
    <svg class="axis" viewBox="-.5 -.5 40 40"><path d="M0 1l13 12M13 13h-7v20h20v-6M28 26l10 13"/><text x="12" y="11">Y</text><text x="25" y="25">X</text></svg>
  </section>
</main>

<form class="command">
  <label for="cmd">命令<span class="mono">:</span></label>
  <input id="cmd" type="text">
</form>

<footer class="status">
  <span class="pane msg"></span>
  <span class="pane coord">X=100.0000 Y=161.6000</span>
  <span class="pane ratio">绘图比例:1:1</span>
  <span class="pane ortho">非正交</span>
  <span class="pane nav">非导航</span>
  <span class="pane rel">相对输入</span>
</footer>
</body>
</html>
```
FILE: styles.css
```css
:root {
  --face: #c0dcc0;
  --shade: #808080;
  --dark: #404040;
}

* { box-sizing: border-box; }

body {
  margin: 0;
  height: 100vh;
  display: flex;
  flex-direction: column;
  overflow: hidden;
  background: var(--face);
  color: #000;
  font: 12px/16px "Liberation Sans", "Noto Sans CJK SC", sans-serif;
}

button, input, select {
  font: inherit;
  color: inherit;
  background: none;
  border: 0;
  border-radius: 0;
  padding: 0;
  margin: 0;
}

ul { list-style: none; margin: 0; padding: 0; }

.patterns { position: absolute; width: 0; height: 0; }
.sprite { display: none; }

.icon, .wi {
  display: block;
  flex: none;
  width: 16px;
  height: 16px;
  fill: none;
  stroke: #000;
  shape-rendering: crispEdges;
}
.wi { width: 12px; height: 10px; }

.glyph { font: bold 7px "Liberation Sans", sans-serif; fill: #000; stroke: none; }
.glyph.red { fill: #c00000; }
.glyph.serif { font-family: "Liberation Serif", serif; }
.glyph.cjk { font: 8px "Noto Sans CJK SC", sans-serif; }
.big-a { font: 17px "Liberation Serif", serif; fill: #000; stroke: none; }
.small-a { font: bold 12px "Liberation Serif", serif; fill: #000080; stroke: none; }

/* Title bar */
.titlebar {
  flex: none;
  display: flex;
  align-items: center;
  gap: 2px;
  height: 18px;
  padding: 0 2px;
  background: linear-gradient(90deg, #0a246a 0%, #0a246a 18%, #202080 23%, #204080 27%, #40607f 34%, #6058c0 40%, #6080c0 44%, #6080c0 58%, #8080c0 60%, #80a0c0 63%, #80a0c0 77%, #80c0c0 81%, #a6caf0 85%);
}
.title {
  flex: 1;
  margin: 0;
  color: #fff;
  font: bold 12px/16px "Noto Sans CJK SC", sans-serif;
  white-space: pre;
}
.title span { font: bold 11px/16px "DejaVu Sans", sans-serif; }

.winbtns { display: flex; margin-left: auto; }
.winbtn {
  width: 16px;
  height: 14px;
  background: var(--face);
  border: 1px solid;
  border-color: #fff var(--dark) var(--dark) #fff;
  box-shadow: inset -1px -1px var(--shade);
  padding: 1px;
}
.winbtn.apart { margin-left: 2px; }

/* Menu bar */
.menubar {
  flex: none;
  display: flex;
  align-items: flex-start;
  height: 31px;
  padding: 4px 0 0 2px;
  border-top: 1px solid var(--shade);
  border-bottom: 1px solid #fff;
  box-shadow: inset 0 1px #fff, inset 0 -1px var(--shade);
}
.menubar .winbtns { margin-top: 6px; }
.menubar .winbtn { width: 15px; }
.menubar .winbtn .wi { margin-left: -1px; }
.menubar .doc { margin: 3px -1px 0 0; }

.grip {
  flex: none;
  width: 6px;
  height: 22px;
  margin-right: 2px;
  border-left: 1px solid #fff;
  border-right: 1px solid var(--shade);
  background: linear-gradient(90deg, #fff 1px, var(--shade) 1px 2px, #fff 2px 4px);
}

.menus { display: flex; }
.menus > li { position: relative; }
.menu {
  display: flex;
  align-items: center;
  height: 22px;
  padding: 0 5px;
  border: 1px solid transparent;
  white-space: nowrap;
}
.menu u, .menu i { font: 12px/16px "Liberation Serif", serif; }
.menu u { width: 7px; text-underline-offset: 2px; }
.menu u.mid { width: 9px; }
.menu u.wide { width: 11px; }
.menu i { width: 3px; }
.open > .menu { border-color: var(--shade) #fff #fff var(--shade); }

.dropdown {
  position: absolute;
  z-index: 5;
  top: 22px;
  left: 0;
  width: 180px;
  padding: 2px 0 1px;
  background: var(--face);
  border: 1px solid;
  border-color: var(--face) var(--dark) var(--dark) var(--face);
  box-shadow: inset 1px 1px #fff, inset -1px -1px var(--shade);
}
.item {
  display: flex;
  align-items: center;
  gap: 6px;
  width: 100%;
  height: 18px;
  padding-left: 3px;
  white-space: nowrap;
}
.item.plain { padding-left: 25px; }
.rule { height: 8px; padding: 3px 4px 3px 1px; }
.rule::before {
  content: "";
  display: block;
  height: 2px;
  border-top: 1px solid var(--shade);
  border-bottom: 1px solid #fff;
}

/* Toolbars */
.row { flex: none; display: flex; }
.toolbar {
  display: flex;
  align-items: flex-start;
  height: 28px;
  padding: 2px 11px 0 2px;
  border-bottom: 1px solid #fff;
  border-right: 1px solid #fff;
  box-shadow: inset -1px -1px var(--shade);
}
.toolbar.topline {
  height: 30px;
  border-top: 1px solid var(--shade);
  box-shadow: inset -1px -1px var(--shade), inset 0 1px #fff;
}
.toolbar.last { border-bottom: 0; box-shadow: inset -1px 0 var(--shade); height: 26px; }
.toolbar.parts { width: 248px; margin-left: 1px; justify-content: flex-end; }

.tool {
  flex: none;
  width: 23px;
  height: 22px;
  padding: 3px 4px 3px 3px;
}
.tool:disabled .icon {
  stroke: #808080;
  filter: drop-shadow(1px 1px 0 #fff);
}
.tool.pressed {
  border: 1px solid;
  border-color: var(--shade) #fff #fff var(--shade);
  padding: 2px 3px 2px 2px;
  background: repeating-conic-gradient(#fff 0 25%, var(--face) 0 50%) 0 0 / 2px 2px;
}
.more {
  width: 13px;
  height: 22px;
  border: 1px solid;
  border-color: var(--face) #fff #fff var(--shade);
  display: grid;
  place-items: center;
}
.tiny { width: 6px; height: 3px; }

.sep {
  flex: none;
  width: 2px;
  height: 22px;
  margin: 0 2px 0 4px;
  border-left: 1px solid var(--shade);
  border-right: 1px solid #fff;
}
.space { flex: none; }
.space.std { width: 169px; }
.space.dims { width: 191px; }

.toolbar.props { padding: 3px 7px 0 5px; box-shadow: inset -1px 0 var(--shade); border-bottom: 0; }
.bar {
  flex: none;
  width: 2px;
  height: 20px;
  margin: 2px 5px 0;
  border-left: 1px solid var(--shade);
  border-right: 1px solid #fff;
}
.tool + .bar { margin: 2px 3px 0 0; }

.combo {
  position: relative;
  flex: none;
  display: flex;
  align-items: center;
  height: 21px;
  margin-top: 3px;
  padding: 1px 18px 0 3px;
  background: #fff;
  border: 2px solid;
  border-color: var(--dark) #fff #fff var(--dark);
}
.combo.layer { width: 178px; font: bold 14px/16px "Liberation Mono", monospace; }
.combo.color { width: 98px; font-size: 14px; gap: 2px; }
.combo.ltype { width: 186px; }
.combo select { appearance: none; flex: 1; min-width: 0; }
.swatch { flex: none; width: 26px; height: 12px; background: #000; }
.drop {
  position: absolute;
  top: 0;
  right: 0;
  width: 15px;
  height: 17px;
  padding: 6px 3px 5px;
  background: var(--face);
  border: 1px solid;
  border-color: #fff var(--shade) var(--shade) #fff;
  pointer-events: none;
}

/* Work area */
.work {
  flex: 1;
  min-height: 0;
  display: flex;
  align-items: flex-start;
  border-top: 1px solid var(--shade);
}
.palette {
  flex: none;
  display: flex;
  flex-direction: column;
  align-items: center;
  width: 28px;
  padding-bottom: 7px;
  border-top: 1px solid #fff;
  border-bottom: 1px solid #fff;
  border-right: 1px solid var(--shade);
  box-shadow: inset 0 -1px var(--shade);
}
.palette.draw { padding-right: 2px; }
.palette.edit {
  border-left: 1px solid #fff;
  border-right: 0;
}
.hgrip {
  width: 23px;
  height: 6px;
  margin: 2px 0 4px;
  border-top: 1px solid #fff;
  border-bottom: 1px solid var(--shade);
  background: linear-gradient(#fff 1px, var(--shade) 1px 2px, #fff 2px 4px);
}
.hsep {
  width: 23px;
  height: 2px;
  margin: 4px 0 3px;
  border-top: 1px solid var(--shade);
  border-bottom: 1px solid #fff;
}
.canvas {
  flex: 1;
  align-self: stretch;
  display: flex;
  align-items: flex-end;
  margin-right: 1px;
  background: #000;
  border: solid var(--dark);
  border-width: 1px 0 0 2px;
}
.axis {
  width: 40px;
  height: 40px;
  fill: none;
  stroke: #fff;
  shape-rendering: crispEdges;
}
.axis text { font: 10px "Liberation Sans", sans-serif; fill: #fff; stroke: none; }

/* Command line */
.command {
  flex: none;
  display: flex;
  align-items: center;
  height: 22px;
  margin: 3px 0 4px 1px;
  padding-left: 5px;
  background: #fff;
  border-top: 2px solid var(--dark);
  border-left: 2px solid var(--dark);
  font-size: 14px;
  box-shadow: 0 -1px var(--face), 0 -2px #fff, 0 1px var(--face), 0 2px #fff;
}
.command .mono { font-family: "DejaVu Sans Mono", monospace; }
.command input { flex: 1; outline: 0; }

/* Status bar */
.status { flex: none; display: flex; gap: 2px; height: 16px; }
.pane {
  flex: none;
  padding-left: 3px;
  border: 1px solid;
  border-color: var(--shade) #fff transparent var(--shade);
  line-height: 16px;
  white-space: nowrap;
}
.msg { width: 256px; }
.coord { width: 206px; font-family: "DejaVu Sans Mono", monospace; font-size: 10px; }
.ratio { width: 106px; padding-left: 0; }
.ortho { width: 48px; }
.nav { width: 42px; }
.rel { width: 63px; }
```
